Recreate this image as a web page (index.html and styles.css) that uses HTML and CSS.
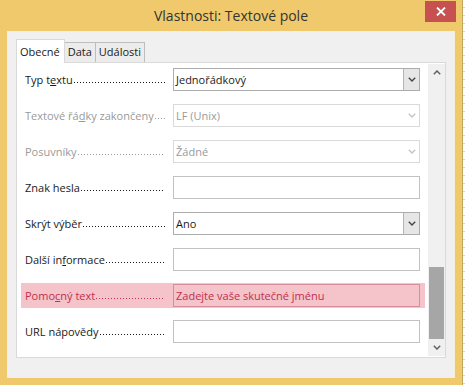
FILE: index.html
```html
<!DOCTYPE html>
<html lang="cs">
<head>
    <meta charset="UTF-8">
    <title>Vlastnosti: Textové pole</title>
    <link rel="stylesheet" href="styles.css">
</head>
<body>
    <div class="window">
        <!-- titulek okna -->
        <div class="titlebar">
            <span></span>
            <div class="title">Vlastnosti: Textové pole</div>
            <button class="close">
                <svg width="10" height="9" viewBox="0 0 10 9"><path d="M1 0.5 L9 8.5 M9 0.5 L1 8.5" stroke="#fff" stroke-width="1.8" fill="none"/></svg>
            </button>
        </div>

        <div class="client">
            <!-- záložky -->
            <div class="tabs">
                <div class="tab active">Obecné</div>
                <div class="tab">Data</div>
                <div class="tab">Události</div>
            </div>

            <div class="panel">
                <div class="rows">
                    <div class="row">
                        <div class="label"><span>Typ t<u>e</u>xtu</span><span class="dots"></span></div>
                        <div class="combo">
                            <span class="value">Jednořádkový</span>
                            <span class="drop"><svg width="8" height="5" viewBox="0 0 8 5"><polyline points="0.8,0.8 4,4 7.2,0.8" fill="none" stroke="#444" stroke-width="1.4"/></svg></span>
                        </div>
                    </div>
                    <div class="row disabled">
                        <div class="label"><span>Textové řá<u>d</u>ky zakončeny</span><span class="dots"></span></div>
                        <div class="combo">
                            <span class="value">LF (Unix)</span>
                            <span class="drop"><svg width="8" height="5" viewBox="0 0 8 5"><polyline points="0.8,0.8 4,4 7.2,0.8" fill="none" stroke="#c4c4c4" stroke-width="1.4"/></svg></span>
                        </div>
                    </div>
                    <div class="row disabled">
                        <div class="label"><span>Posuvníky</span><span class="dots"></span></div>
                        <div class="combo">
                            <span class="value">Žádné</span>
                            <span class="drop"><svg width="8" height="5" viewBox="0 0 8 5"><polyline points="0.8,0.8 4,4 7.2,0.8" fill="none" stroke="#c4c4c4" stroke-width="1.4"/></svg></span>
                        </div>
                    </div>
                    <div class="row">
                        <div class="label"><span>Znak hesla</span><span class="dots"></span></div>
                        <div class="field"></div>
                    </div>
                    <div class="row">
                        <div class="label"><span>Skrýt výběr</span><span class="dots"></span></div>
                        <div class="combo">
                            <span class="value">Ano</span>
                            <span class="drop"><svg width="8" height="5" viewBox="0 0 8 5"><polyline points="0.8,0.8 4,4 7.2,0.8" fill="none" stroke="#444" stroke-width="1.4"/></svg></span>
                        </div>
                    </div>
                    <div class="row">
                        <div class="label"><span>Další in<u>f</u>ormace</span><span class="dots"></span></div>
                        <div class="field"></div>
                    </div>
                    <div class="row highlight">
                        <div class="label"><span>Pomo<u>c</u>ný text</span><span class="dots"></span></div>
                        <div class="field">Zadejte vaše skutečné jménu</div>
                    </div>
                    <div class="row">
                        <div class="label"><span>URL nápovědy</span><span class="dots"></span></div>
                        <div class="field"></div>
                    </div>
                </div>

                <!-- posuvník -->
                <div class="scrollbar">
                    <div class="arrow"><svg width="8" height="5" viewBox="0 0 8 5"><polyline points="0.8,4.2 4,1 7.2,4.2" fill="none" stroke="#606060" stroke-width="1.5"/></svg></div>
                    <div class="track"><div class="thumb"></div></div>
                    <div class="arrow"><svg width="8" height="5" viewBox="0 0 8 5"><polyline points="0.8,0.8 4,4 7.2,0.8" fill="none" stroke="#606060" stroke-width="1.5"/></svg></div>
                </div>
            </div>
        </div>
    </div>
</body>
</html>
```

FILE: styles.css
```css
* {
    box-sizing: border-box;
}
body {
    margin: 0;
    font-family: "Open Sans", "Noto Sans", sans-serif;
    font-size: 11px;
    color: #1a1a1a;
    background: repeating-linear-gradient(to bottom, #ffffff 0 7px, #d6d6d6 7px 8px);
}
.window {
    width: 463px;
    height: 385px;
    background: #f0c96c;
    border-right: 1px solid #c3a65e;
    padding: 0 7px 7px 7px;
    display: flex;
    flex-direction: column;
}
/* titulek */
.titlebar {
    height: 31px;
    display: grid;
    grid-template-columns: 1fr auto 1fr;
    align-items: start;
}
.title {
    font-size: 14px;
    color: #333;
    line-height: 31px;
    white-space: nowrap;
}
.close {
    justify-self: end;
    margin: 1px -1px 0 0;
    width: 31px;
    height: 21px;
    padding: 0;
    border: none;
    background: #c75050;
    display: flex;
    align-items: center;
    justify-content: center;
}
.client {
    flex: 1;
    background: #f0f0f0;
    border: 1px solid #f8efd9;
    padding: 7px 7px 0 8px;
}
/* záložky */
.tabs {
    display: flex;
    align-items: flex-end;
    height: 23px;
}
.tab {
    height: 20px;
    padding: 0 3px;
    line-height: 18px;
    background: #ececec;
    border: 1px solid #bdbdbd;
    border-bottom: none;
    margin-left: -1px;
}
.tab.active {
    height: 24px;
    margin-left: 0;
    margin-bottom: -1px;
    padding: 0 4px 0 3px;
    line-height: 24px;
    background: #fff;
    border-color: #d9d9d9;
    position: relative;
    z-index: 1;
}
.panel {
    width: 430px;
    height: 296px;
    background: #fff;
    border: 1px solid #d9d9d9;
    display: flex;
}
.rows {
    flex: 1;
    padding: 4px 0 0 4px;
    display: flex;
    flex-direction: column;
    gap: 11px;
}
.row {
    width: 404px;
    height: 25px;
    padding: 1px 5px 1px 4px;
    display: flex;
    align-items: center;
    gap: 8px;
}
.label {
    width: 140px;
    display: flex;
    line-height: 15px;
    white-space: nowrap;
}
/* tečkovaný odkaz za popiskem */
.dots {
    flex: 1;
    height: 1px;
    align-self: flex-end;
    margin: 0 0 4px 1px;
    background: linear-gradient(to right, currentColor 1px, transparent 1px) 0 0 / 3px 1px repeat-x;
}
.combo, .field {
    width: 247px;
    height: 23px;
    border: 1px solid #acacac;
    background: #fff;
    display: flex;
    align-items: center;
    padding-left: 2px;
    white-space: nowrap;
}
.field {
    border-color: #c2c2c2;
}
.value {
    flex: 1;
}
.drop {
    width: 16px;
    height: 21px;
    background: #e6e6e6;
    border-left: 1px solid #b4b4b4;
    display: flex;
    align-items: center;
    justify-content: center;
}
.disabled .label, .disabled .value {
    color: #9a9a9a;
}
.disabled .combo {
    border-color: #d9d9d9;
}
.disabled .drop {
    background: none;
    border-left-color: transparent;
}
.highlight {
    background: #f5c3ca;
    color: #c0304e;
}
.highlight .field {
    background: #f5c3ca;
    border-color: #d88c9c;
}
/* posuvník */
.scrollbar {
    width: 17px;
    margin: 1px 0;
    background: #f0f0f0;
    display: flex;
    flex-direction: column;
}
.arrow {
    height: 17px;
    display: flex;
    align-items: center;
    justify-content: center;
}
.track {
    flex: 1;
    display: flex;
    flex-direction: column;
    justify-content: flex-end;
    padding: 0 1px;
}
.thumb {
    height: 72px;
    background: #a6a6a6;
}
```
